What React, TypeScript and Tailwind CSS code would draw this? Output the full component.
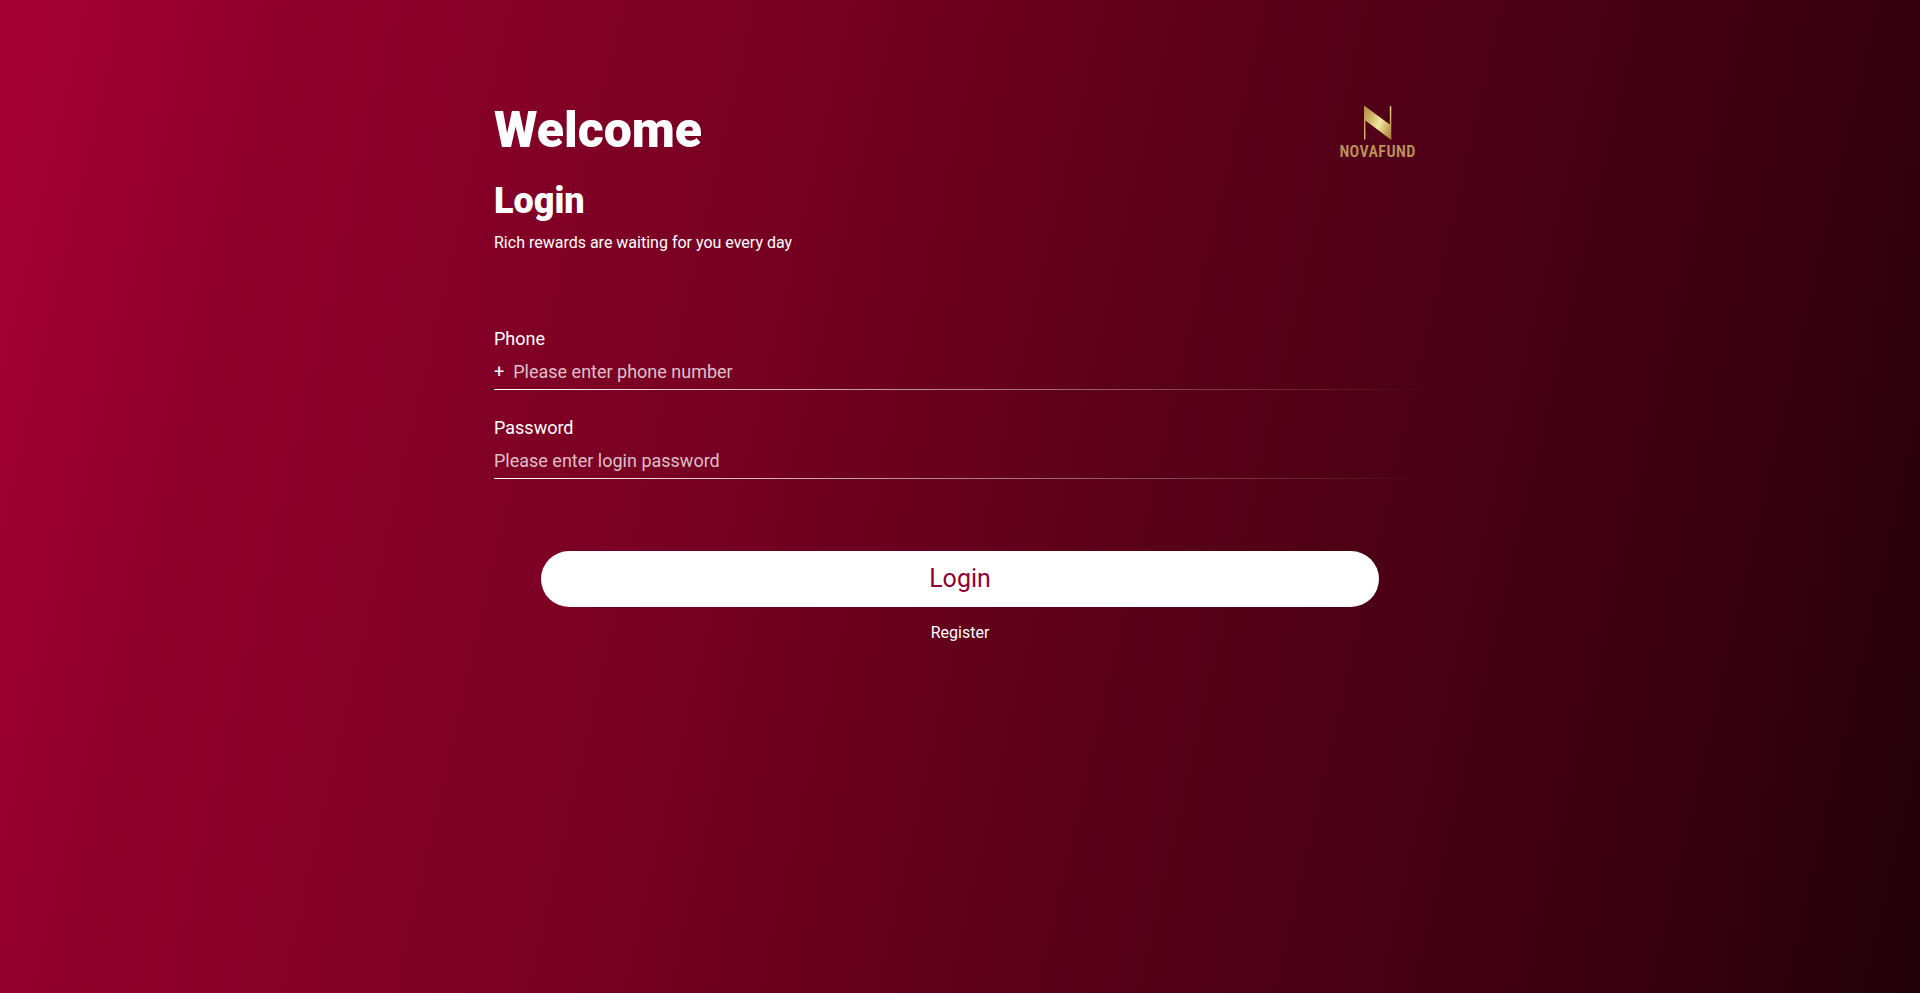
import { useState } from "react";

function Logo() {
  return (
    <svg viewBox="0 0 110 80" className="h-20 w-[110px]" role="img" aria-label="Novafund">
      <defs>
        <linearGradient id="gold" x1="0" y1="0.2" x2="1" y2="0.8">
          <stop offset="0" stopColor="#b8944f" />
          <stop offset="0.25" stopColor="#cfb467" />
          <stop offset="0.55" stopColor="#f3e9a0" />
          <stop offset="0.8" stopColor="#d0b266" />
          <stop offset="1" stopColor="#b08a4c" />
        </linearGradient>
      </defs>
      <path d="M44 15.5 L69.8 34.5 V16.2 H71.3 V50 L45.4 30.5 V49.5 H44 Z" fill="url(#gold)" />
      <text
        x="57.5"
        y="67"
        textAnchor="middle"
        fill="#bb935a"
        className="font-['Roboto_Condensed',Roboto,sans-serif] text-[16px] font-semibold tracking-wide"
      >
        NOVAFUND
      </text>
    </svg>
  );
}

const inputClass =
  "h-6 min-w-0 flex-1 bg-transparent text-lg leading-6 text-white outline-none placeholder:text-white/75";

const ruleClass = "h-px bg-linear-to-r from-white to-transparent";

export default function App() {
  const [phone, setPhone] = useState("");
  const [password, setPassword] = useState("");

  return (
    <main className="min-h-screen bg-[linear-gradient(103deg,#a60034_0%,#92002d_12%,#740021_40%,#580019_60%,#380010_87%,#20000a_100%)] font-[Roboto,sans-serif] text-white">
      <div className="mx-auto max-w-[960px] px-[14px] pt-[90px]">
        <header className="flex items-start justify-between">
          <h1 className="pt-[10px] text-[50px] leading-[60px] font-black">Welcome</h1>
          <div className="-mr-1">
            <Logo />
          </div>
        </header>
        <h2 className="mt-[9px] text-4xl leading-[44px] font-black">Login</h2>
        <p className="mt-2 text-base leading-6">Rich rewards are waiting for you every day</p>

        <form className="mt-[72px]" onSubmit={(e) => e.preventDefault()}>
          <label htmlFor="phone" className="block text-lg leading-6">
            Phone
          </label>
          <div className="mt-[9px] flex items-center gap-[9px] pb-[5px] text-lg leading-6">
            <span>+</span>
            <input
              id="phone"
              type="tel"
              value={phone}
              onChange={(e) => setPhone(e.target.value)}
              placeholder="Please enter phone number"
              className={inputClass}
            />
          </div>
          <div className={ruleClass} />

          <label htmlFor="password" className="mt-[26px] block text-lg leading-6">
            Password
          </label>
          <div className="mt-[9px] flex items-center pb-[5px]">
            <input
              id="password"
              type="password"
              value={password}
              onChange={(e) => setPassword(e.target.value)}
              placeholder="Please enter login password"
              className={inputClass}
            />
          </div>
          <div className={ruleClass} />

          <button
            type="submit"
            className="mx-auto mt-[72px] block h-14 w-[90%] rounded-full bg-white text-[25px] text-[#910035]"
          >
            Login
          </button>
        </form>
        <div className="mt-[14px] text-center">
          <a href="#register" className="text-base leading-6">
            Register
          </a>
        </div>
      </div>
    </main>
  );
}
